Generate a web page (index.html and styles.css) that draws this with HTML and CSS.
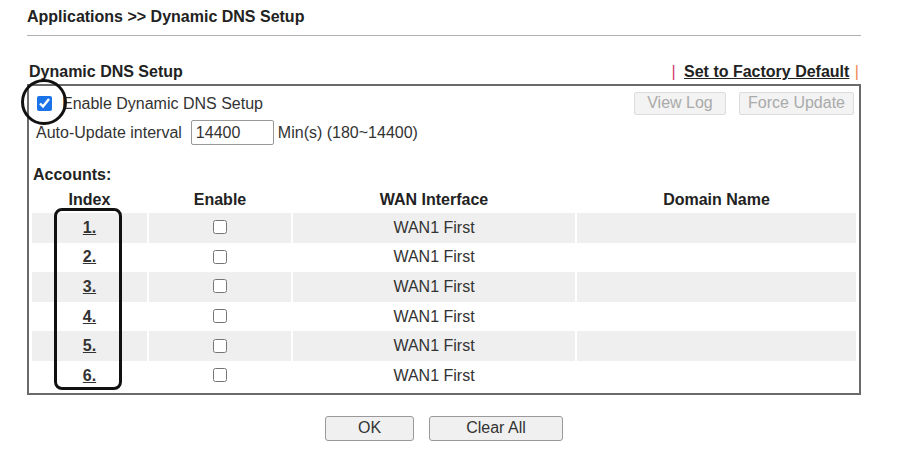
FILE: index.html
```html
<!DOCTYPE html>
<html lang="en">
<head>
    <meta charset="UTF-8">
    <title>Dynamic DNS Setup</title>
    <link rel="stylesheet" href="styles.css">
</head>
<body>
    <div class="page">
        <h1 class="titulo">Applications &gt;&gt; Dynamic DNS Setup</h1>

        <div class="cabecera">
            <span class="seccion">Dynamic DNS Setup</span>
            <span class="enlaces">
                <span class="barra barra-roja">|</span>
                <a href="#" class="factory">Set to Factory Default</a>
                <span class="barra barra-naranja">|</span>
            </span>
        </div>

        <div class="caja">
            <div class="fila-top">
                <label class="habilitar">
                    <input type="checkbox" class="check-grande" checked>
                    <span>Enable Dynamic DNS Setup</span>
                </label>
                <div class="acciones">
                    <button class="btn-off" disabled>View Log</button>
                    <button class="btn-off btn-force" disabled>Force Update</button>
                </div>
            </div>
            <div class="fila-intervalo">
                <span>Auto-Update interval</span>
                <input type="text" class="intervalo" value="14400">
                <span>Min(s) (180~14400)</span>
            </div>

            <div class="cuentas">Accounts:</div>
            <div class="tabla-wrap">
                <table class="tabla">
                    <thead>
                        <tr>
                            <th class="c-index">Index</th>
                            <th class="c-enable">Enable</th>
                            <th class="c-wan">WAN Interface</th>
                            <th>Domain Name</th>
                        </tr>
                    </thead>
                    <tbody id="filas"></tbody>
                </table>
            </div>
        </div>

        <div class="botones">
            <button class="btn btn-ok">OK</button>
            <button class="btn btn-clear">Clear All</button>
        </div>

        <!-- marcas de anotacion -->
        <div class="marca-circulo"></div>
        <div class="marca-rect"></div>
    </div>

    <script>
        const filas = document.getElementById('filas');
        for (let i = 1; i <= 6; i++) {
            const tr = document.createElement('tr');
            tr.className = i % 2 ? 'gris' : 'blanca';
            tr.innerHTML = `
                <td><a href="#" class="idx">${i}.</a></td>
                <td><input type="checkbox" class="check"></td>
                <td>WAN1 First</td>
                <td></td>
            `;
            filas.appendChild(tr);
        }
    </script>
</body>
</html>
```

FILE: styles.css
```css
body {
    margin: 0;
    font-family: "Liberation Sans", Arial, sans-serif;
    font-size: 16px;
    color: #333;
    background: #fff;
}
.page {
    position: relative;
    width: 834px;
    padding-left: 27px;
}
.titulo {
    margin: 0;
    padding-top: 7px;
    padding-bottom: 8px;
    font-size: 16px;
    line-height: 20px;
    color: #222;
    border-bottom: 1px solid #b0b0b0;
}
.cabecera {
    display: flex;
    justify-content: space-between;
    align-items: center;
    margin-top: 26px;
    margin-bottom: 2px;
    line-height: 20px;
    font-weight: bold;
    color: #222;
}
.seccion {
    padding-left: 2px;
}
.enlaces {
    padding-right: 2px;
}
.barra {
    font-weight: normal;
}
.barra-roja { color: #d03a6a; margin-right: 4px; }
.barra-naranja { color: #f08a50; margin-left: 1px; }
.factory {
    color: #222;
    text-decoration: underline;
}
.caja {
    border: 2px solid #6a6a6a;
    padding-bottom: 2px;
}
.fila-top {
    display: flex;
    justify-content: space-between;
    align-items: center;
    height: 30px;
    padding-top: 2px;
}
.habilitar {
    display: flex;
    align-items: center;
    padding-left: 8px;
    padding-top: 2px;
}
.check-grande {
    width: 15px;
    height: 15px;
    margin: 0 10px 2px 0;
    accent-color: #1a73e8;
}
.acciones {
    display: flex;
    gap: 13px;
    margin-right: 5px;
}
.btn-off {
    height: 23px;
    padding: 0;
    font-family: inherit;
    font-size: 16px;
    color: #aaa;
    background: #f3f3f3;
    border: 1px solid #dcdcdc;
    border-radius: 2px;
    width: 92px;
}
.btn-force {
    width: 115px;
}
.fila-intervalo {
    display: flex;
    align-items: center;
    height: 29px;
    padding-left: 7px;
}
.intervalo {
    width: 83px;
    height: 25px;
    box-sizing: border-box;
    margin: 0 4px 0 9px;
    padding: 0 4px;
    font-family: inherit;
    font-size: 16px;
    color: #333;
    border: 1px solid #999;
    border-radius: 2px;
}
.cuentas {
    margin-top: 18px;
    padding-left: 4px;
    line-height: 20px;
    font-weight: bold;
    color: #222;
}
.tabla-wrap {
    padding: 1px 1px 0;
}
.tabla {
    width: 100%;
    border-spacing: 2px 0;
}
.tabla th {
    height: 27px;
    padding: 0;
    font-weight: bold;
    color: #222;
    text-align: center;
}
.c-index { width: 115px; }
.c-enable { width: 142px; }
.c-wan { width: 282px; }
.tabla td {
    height: 29.6px;
    padding: 0;
    text-align: center;
}
.gris td {
    background: #efefef;
}
.idx {
    color: #333;
    font-weight: bold;
    text-decoration: underline;
}
.check {
    width: 14px;
    height: 14px;
    margin: 3px 0 0 0;
}
.botones {
    display: flex;
    justify-content: center;
    gap: 15px;
    margin-top: 21px;
}
.btn {
    height: 25px;
    padding: 0;
    font-family: inherit;
    font-size: 16px;
    color: #333;
    background: #f0f0f0;
    border: 1px solid #999;
    border-radius: 3px;
}
.btn-ok { width: 89px; }
.btn-clear { width: 134px; }

.marca-circulo {
    position: absolute;
    left: 21px;
    top: 79px;
    width: 40px;
    height: 40px;
    border: 3px solid #111;
    border-radius: 50%;
}
.marca-rect {
    position: absolute;
    left: 54px;
    top: 208px;
    width: 62px;
    height: 176px;
    border: 3px solid #111;
    border-radius: 8px;
}
```
